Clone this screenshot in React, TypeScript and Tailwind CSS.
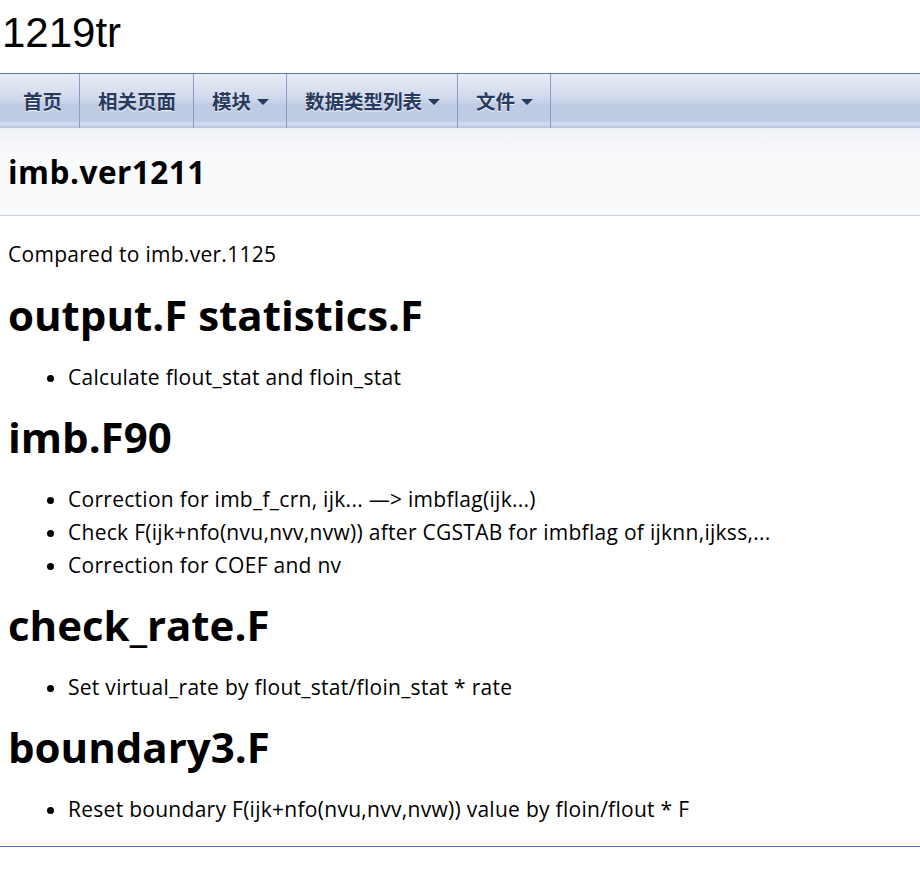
const tabs = [
  { label: '首页', menu: false },
  { label: '相关页面', menu: false },
  { label: '模块', menu: true },
  { label: '数据类型列表', menu: true },
  { label: '文件', menu: true },
]

const sections = [
  { title: 'output.F statistics.F', items: ['Calculate flout_stat and floin_stat'] },
  {
    title: 'imb.F90',
    items: [
      'Correction for imb_f_crn, ijk... —> imbflag(ijk...)',
      'Check F(ijk+nfo(nvu,nvv,nvw)) after CGSTAB for imbflag of ijknn,ijkss,...',
      'Correction for COEF and nv',
    ],
  },
  { title: 'check_rate.F', items: ['Set virtual_rate by flout_stat/floin_stat * rate'] },
  { title: 'boundary3.F', items: ['Reset boundary F(ijk+nfo(nvu,nvv,nvw)) value by floin/flout * F'] },
]

export default function App() {
  return (
    <div className="w-[920px] h-[886px] bg-white text-black overflow-hidden font-['Open_Sans','Noto_Sans_CJK_SC',sans-serif]">
      <div className="h-[74px] border-b border-[#5373B4] pl-[2px]">
        <div className="font-['Liberation_Sans',Arial,sans-serif] text-[42px] leading-[64px] pt-[1px]">1219tr</div>
      </div>

      <nav className="h-[54px] pl-[5px] flex bg-[linear-gradient(to_bottom,#e9edf6_0%,#d3dbed_40%,#c9d3e8_52%,#bfcbe3_56%,#bfcbe3_86%,#d7deef_92%,#b7c3df_100%)]">
        {tabs.map((t) => (
          <div
            key={t.label}
            className={`relative flex items-center h-full border-r border-[#8a9dc6] pl-[18px] ${t.menu ? 'pr-[35px]' : 'pr-[17px]'} font-['Noto_Sans_CJK_SC',sans-serif] font-bold text-[19.5px] text-[#283A5D] [text-shadow:0_1px_1px_rgba(255,255,255,0.9)]`}
          >
            {t.label}
            {t.menu && (
              <span className="absolute right-[17px] top-[25px] w-0 h-0 border-x-[6px] border-x-transparent border-t-[6px] border-t-[#283A5D]" />
            )}
          </div>
        ))}
      </nav>

      <div className="h-[88px] border-b border-[#C4CFE5] bg-[linear-gradient(to_bottom,#eef1f7_0%,#f9fafc_30%,#f9fafc_100%)] flex items-center px-[8px]">
        <div className="font-bold text-[31.5px] leading-[42px] tracking-[0.5px]">imb.ver1211</div>
      </div>

      <div className="px-[8px] pt-[22px] pb-[20px] flex flex-col gap-[19px] text-[21px] leading-[33px] tracking-[0.28px] border-b border-[#5373B4]">
        <p className="mb-[1px]">Compared to imb.ver.1125</p>
        {sections.map((s) => (
          <div key={s.title} className="flex flex-col">
            <h1 className="text-[42px] leading-[48px] font-bold tracking-normal">{s.title}</h1>
            <ul className="list-disc pl-[60px] mt-[22px]">
              {s.items.map((i) => (
                <li key={i}>{i}</li>
              ))}
            </ul>
          </div>
        ))}
      </div>
    </div>
  )
}
